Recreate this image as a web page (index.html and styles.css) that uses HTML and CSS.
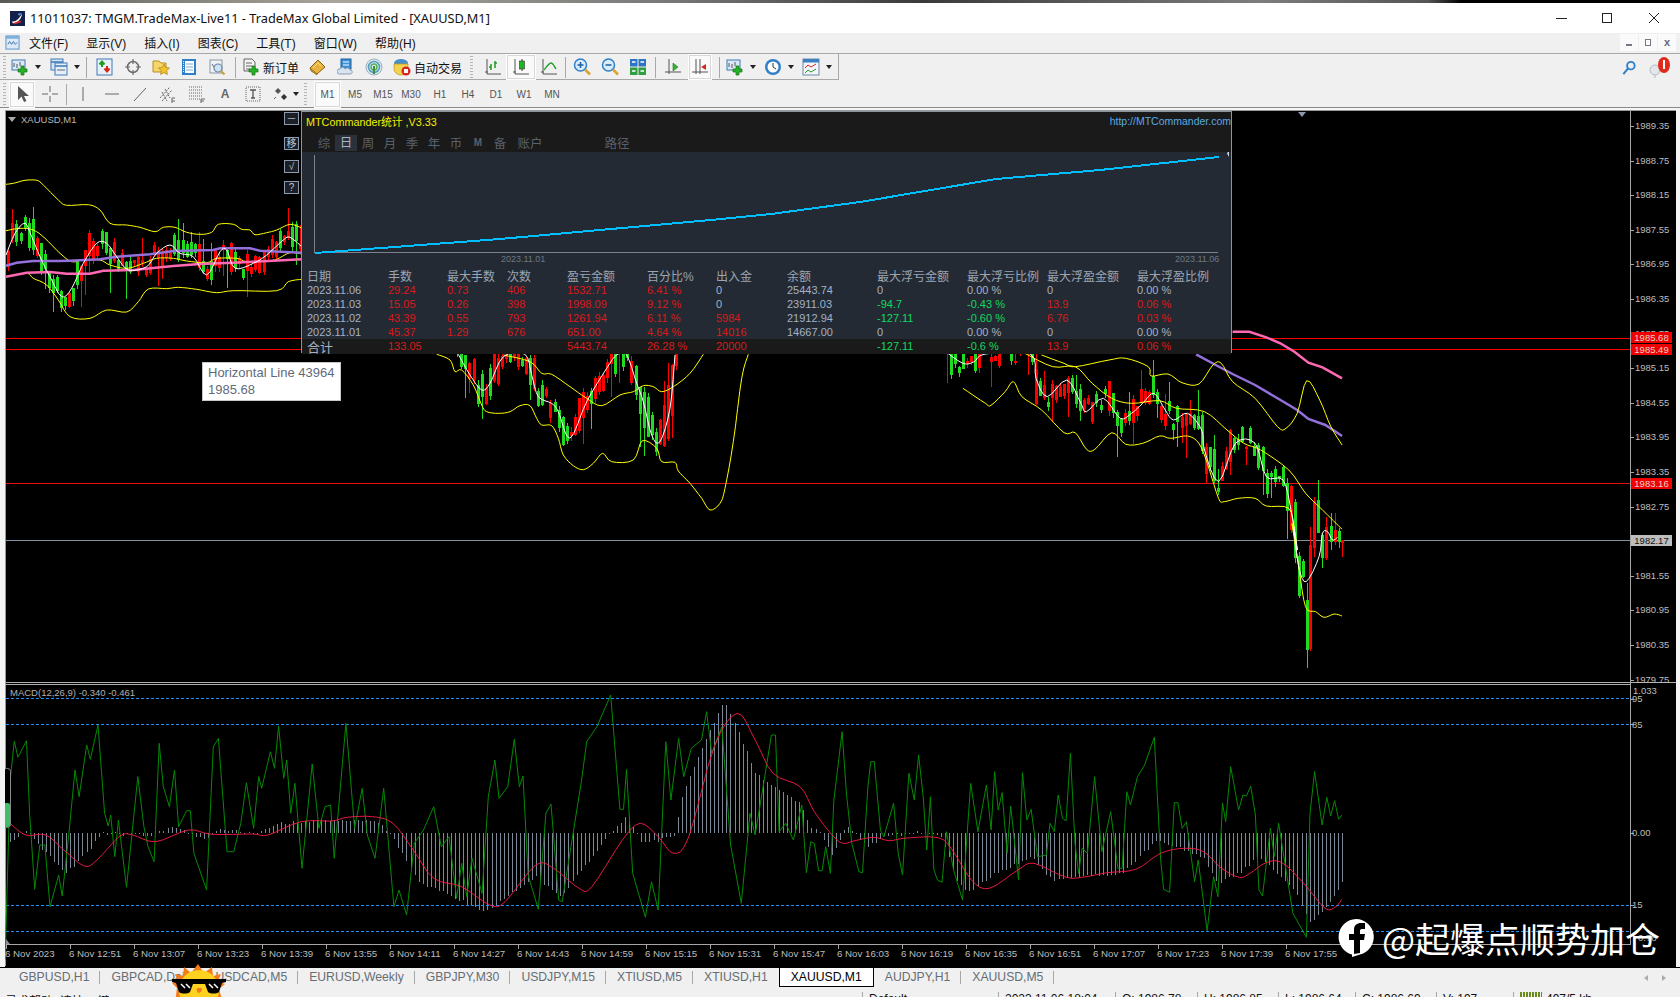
FILE: index.html
```html
<!DOCTYPE html>
<html lang="zh">
<head>
<meta charset="utf-8">
<title>MT4</title>
<link rel="stylesheet" href="styles.css">
</head>
<body>
<svg class="defs" width="0" height="0">
  <defs>
    <symbol id="i-newchart" viewBox="0 0 18 18"><rect x="1" y="2" width="13" height="10" fill="#dbe9f7" stroke="#3f78b5"/><path d="M3 9V5M6 10V6M9 8V4" stroke="#555"/><path d="M10 8h3v3h3v3h-3v3h-3v-3H7v-3h3z" fill="#27b327" stroke="#127012" stroke-width=".7"/></symbol>
    <symbol id="i-profile" viewBox="0 0 18 18"><rect x="1" y="1" width="12" height="11" fill="#d5e5f5" stroke="#3f78b5"/><rect x="5" y="5" width="12" height="12" fill="#e4effa" stroke="#3f78b5"/><path d="M1 4h12M5 8h12" stroke="#3f78b5" stroke-width="1.5"/><path d="M7 12h8" stroke="#666"/></symbol>
    <symbol id="i-market" viewBox="0 0 18 18"><rect x="1" y="1" width="15" height="16" fill="#e8f1fa" stroke="#3f78b5"/><path d="M6 9V4M3.5 6.5 6 3.5l2.5 3" stroke="#1e9e1e" stroke-width="2" fill="none"/><path d="M11 8v5M8.5 10.5l2.500 3 2.500-3" stroke="#d8261a" stroke-width="2" fill="none"/></symbol>
    <symbol id="i-target" viewBox="0 0 18 18"><circle cx="9" cy="9" r="5.500" fill="none" stroke="#6b6b6b" stroke-width="1.500"/><path d="M9 1v5M9 12v5M1 9h5M12 9h5" stroke="#6b6b6b" stroke-width="1.200"/></symbol>
    <symbol id="i-folder" viewBox="0 0 18 18"><path d="M1 3h6l2 2h5v9H1z" fill="#f6d56a" stroke="#b88f22"/><path d="M12 6l1.700 3.500 3.800.5-2.800 2.600.7 3.900-3.400-1.900-3.400 1.900.7-3.900L6.500 10l3.800-.5z" fill="#f2c32c" stroke="#a9801a" stroke-width=".7"/></symbol>
    <symbol id="i-book" viewBox="0 0 18 18"><rect x="2" y="1" width="14" height="16" fill="#2f7fc9"/><rect x="5" y="3" width="9" height="12" fill="#fff"/><path d="M6 6h7M6 9h7M6 12h7" stroke="#7aa9d6"/><path d="M3.500 3v12" stroke="#e8f1fa" stroke-dasharray="1 1"/></symbol>
    <symbol id="i-strategy" viewBox="0 0 18 18"><rect x="2" y="2" width="12" height="13" fill="#eef1f5" stroke="#8a95a2"/><path d="M4 6l2 3 2-2 3 3" fill="none" stroke="#5d6b7a"/><circle cx="10" cy="10" r="4" fill="#cfe3f5" stroke="#6d88a5" stroke-width="1.200"/><path d="M13 13l3.500 3.500" stroke="#c9a033" stroke-width="2"/></symbol>
    <symbol id="i-order" viewBox="0 0 18 18"><path d="M2 1h8l3 3v9H2z" fill="#f3f3f3" stroke="#666"/><path d="M4 5h6M4 8h6M4 11h4" stroke="#666"/><path d="M10 8h3v3h3v3h-3v3h-3v-3H7v-3h3z" fill="#27b327" stroke="#127012" stroke-width=".7"/></symbol>
    <symbol id="i-gold" viewBox="0 0 18 18"><path d="M1 10l8-8 7 7-8 7z" fill="#e9b23c" stroke="#8a6212"/><path d="M1 10l1 3 6 4v-1" fill="#b88421" stroke="#8a6212" stroke-width=".6"/><path d="M4 10l5-5 3 3" stroke="#f8dd8f" fill="none"/></symbol>
    <symbol id="i-cloud" viewBox="0 0 18 18"><rect x="4" y="1" width="10" height="10" fill="#3b8dd4" stroke="#1f5f9e"/><path d="M6 4h6M6 7h6" stroke="#fff"/><path d="M2 16a2.500 2.500 0 0 1 1-5c1-2 4-2 5 0 2-2 5-1 5 1 3 0 3 4 0 4z" fill="#d7e3ee" stroke="#8a9fb2"/></symbol>
    <symbol id="i-signal" viewBox="0 0 18 18"><circle cx="9" cy="9" r="8" fill="#dbe9ef" stroke="#9ab0bd"/><circle cx="9" cy="9" r="5.500" fill="none" stroke="#4f9ac4" stroke-width="1.500"/><circle cx="9" cy="9" r="3" fill="none" stroke="#55b155" stroke-width="1.500"/><path d="M9 8v8" stroke="#3a8f3a" stroke-width="2"/></symbol>
    <symbol id="i-auto" viewBox="0 0 18 18"><ellipse cx="8" cy="5" rx="7" ry="4" fill="#4a90c8"/><path d="M1 6h14v5a7 6 0 0 1-14 0z" fill="#f3d24f" stroke="#b99622" stroke-width=".7"/><circle cx="13" cy="13" r="4.500" fill="#d9261c"/><rect x="11" y="11" width="4" height="4" fill="#fff"/></symbol>
    <symbol id="i-bar" viewBox="0 0 18 18"><path d="M3 1v15h14M1 14h3" fill="none" stroke="#555"/><path d="M7 6v6M7 9H5M11 3v7M11 5h2" stroke="#1f9a1f" stroke-width="1.500"/></symbol>
    <symbol id="i-candle" viewBox="0 0 18 18"><path d="M3 1v15h14M1 14h3" fill="none" stroke="#555"/><path d="M10 1v12" stroke="#333"/><rect x="7.500" y="3" width="5" height="8" fill="#1fb51f" stroke="#333" stroke-width=".6"/></symbol>
    <symbol id="i-line" viewBox="0 0 18 18"><path d="M3 1v15h14M1 14h3" fill="none" stroke="#555"/><path d="M4 12c3-4 5-7 7-7s3 3 5 6" fill="none" stroke="#1f9a1f" stroke-width="1.300"/></symbol>
    <symbol id="i-zoomin" viewBox="0 0 18 18"><circle cx="7.500" cy="7" r="6" fill="#d9ecfb" stroke="#2f7fc9" stroke-width="1.500"/><path d="M7.500 4v6M4.500 7h6" stroke="#1d5f9e" stroke-width="1.500"/><path d="M12 11.500l5 5" stroke="#d7a52c" stroke-width="2.500"/></symbol>
    <symbol id="i-zoomout" viewBox="0 0 18 18"><circle cx="7.500" cy="7" r="6" fill="#d9ecfb" stroke="#2f7fc9" stroke-width="1.500"/><path d="M4.500 7h6" stroke="#1d5f9e" stroke-width="1.500"/><path d="M12 11.500l5 5" stroke="#d7a52c" stroke-width="2.500"/></symbol>
    <symbol id="i-tile" viewBox="0 0 18 18"><rect x="1" y="1" width="7.500" height="7.500" fill="#2e74c4"/><rect x="9.500" y="1" width="7.500" height="7.500" fill="#2e74c4"/><rect x="1" y="9.500" width="7.500" height="7.500" fill="#2f9e3f"/><rect x="9.500" y="9.500" width="7.500" height="7.500" fill="#2f9e3f"/><path d="M3 4h3.500M11.500 4H15M3 13h3.500M11.500 13H15" stroke="#fff" stroke-width="1.500"/></symbol>
    <symbol id="i-scroll" viewBox="0 0 18 18"><path d="M5 1v15M1 14h16" fill="none" stroke="#555"/><path d="M9 5l5 4-5 4z" fill="#35b135" stroke="#1d7d1d" stroke-width=".6"/></symbol>
    <symbol id="i-shift" viewBox="0 0 18 18"><path d="M9 1v15M1 14h16M5 1v15" fill="none" stroke="#555"/><path d="M15 6l-5 3 5 3z" fill="#d9261c"/></symbol>
    <symbol id="i-clock" viewBox="0 0 18 18"><circle cx="9" cy="9" r="8" fill="#2f7fc9"/><circle cx="9" cy="9" r="5.500" fill="#fff"/><path d="M9 5v4l3 2" fill="none" stroke="#333"/></symbol>
    <symbol id="i-template" viewBox="0 0 18 18"><rect x="1" y="1" width="16" height="16" fill="#f2f6fb" stroke="#6d88a5"/><rect x="1" y="1" width="16" height="3.500" fill="#3b80c2"/><path d="M3 10l3-3 3 2 5-3" fill="none" stroke="#d9261c"/><path d="M3 15l3-3 3 2 5-3" fill="none" stroke="#2a9a2a"/></symbol>
    <symbol id="i-arrow" viewBox="0 0 18 18"><path d="M5 1v14l3.500-3.500L11 17l2.500-1-2.500-5h5z" fill="#555"/></symbol>
    <symbol id="i-cross" viewBox="0 0 18 18"><path d="M9 1v6M9 11v6M1 9h6M11 9h6" stroke="#666"/></symbol>
    <symbol id="i-vline" viewBox="0 0 18 18"><path d="M9 2v14" stroke="#666"/></symbol>
    <symbol id="i-hline" viewBox="0 0 18 18"><path d="M2 9h14" stroke="#666"/></symbol>
    <symbol id="i-trend" viewBox="0 0 18 18"><path d="M3 16L15 3" stroke="#666"/></symbol>
    <symbol id="i-channel" viewBox="0 0 18 18"><path d="M1 13L11 2M3 16L13 5M3 7l5 9M6 4l5 9" stroke="#666" stroke-dasharray="2 1"/><path d="M13 16h3M13 13h3M13 13v6" stroke="#666"/></symbol>
    <symbol id="i-fib" viewBox="0 0 18 18"><path d="M1 2h13M1 5h13M1 8h13M1 11h13M1 14h11" stroke="#666" stroke-dasharray="1 1"/><path d="M13 14v4M13 14h4M13 16h3" stroke="#666"/></symbol>
    <symbol id="i-textbox" viewBox="0 0 18 18"><rect x="2" y="2" width="14" height="14" fill="none" stroke="#666" stroke-dasharray="1 1"/><path d="M6 5h6M9 5v8M7 13h4" stroke="#555" stroke-width="1.300"/></symbol>
    <symbol id="i-arrows" viewBox="0 0 18 18"><path d="M3 6l3-3 3 3-3 3z" fill="#555"/><path d="M9 12l3-3 3 3-3 3z" fill="#333"/><path d="M2 14l2-2" stroke="#666"/></symbol>
  </defs>
</svg>

<div class="app">
  <div class="topstrip"></div>

  <header class="titlebar">
    <svg class="appicon" viewBox="0 0 16 16"><rect width="16" height="16" fill="#12204a"/><path d="M2 11c4 1 7-2 11-8-1 6-5 10-10 10z" fill="#fff"/><path d="M3 13l8-3 1 2-7 2z" fill="#d92b2b"/><path d="M8 3l5-1-3 3z" fill="#5aa0e0"/></svg>
    <span class="titletext">11011037: TMGM.TradeMax-Live11 - TradeMax Global Limited - [XAUUSD,M1]</span>
    <div class="winctl">
      <span class="win-min"></span>
      <span class="win-max"></span>
      <svg class="win-close" viewBox="0 0 12 12"><path d="M1 1l10 10M11 1L1 11" stroke="#222" fill="none"/></svg>
    </div>
  </header>

  <nav class="menubar">
    <svg class="menuicon" viewBox="0 0 16 16"><rect x="1" y="1" width="14" height="14" fill="#dce9f6" stroke="#5b8fc4"/><rect x="1" y="1" width="14" height="3" fill="#7fb0dd"/><path d="M3 10l2-3 2 3 2-3 2 3 2-2" stroke="#3f6f9f" fill="none"/></svg>
    <span>文件(F)</span><span>显示(V)</span><span>插入(I)</span><span>图表(C)</span><span>工具(T)</span><span>窗口(W)</span><span>帮助(H)</span>
    <div class="mdi">
      <span class="mdibtn"><i class="mdi-min"></i></span>
      <span class="mdibtn"><i class="mdi-rest"></i></span>
      <span class="mdibtn mdi-x">x</span>
    </div>
  </nav>

  <div class="row row1">
    <div class="toolbar tb1">
      <i class="grip"></i>
      <span class="tb"><svg><use href="#i-newchart"/></svg></span><i class="drop"></i>
      <span class="tb ml3"><svg><use href="#i-profile"/></svg></span><i class="drop"></i>
      <i class="sep ml5"></i>
      <span class="tb ml4"><svg><use href="#i-market"/></svg></span>
      <span class="tb"><svg><use href="#i-target"/></svg></span>
      <span class="tb"><svg><use href="#i-folder"/></svg></span>
      <span class="tb"><svg><use href="#i-book"/></svg></span>
      <span class="tb"><svg><use href="#i-strategy"/></svg></span>
      <i class="sep ml4"></i>
      <span class="tbtext order"><svg><use href="#i-order"/></svg>新订单</span>
      <span class="tb ml5"><svg><use href="#i-gold"/></svg></span>
      <span class="tb"><svg><use href="#i-cloud"/></svg></span>
      <span class="tb"><svg><use href="#i-signal"/></svg></span>
      <span class="tbtext auto"><svg><use href="#i-auto"/></svg>自动交易</span>
      <i class="grip ml8"></i>
      <span class="tb ml6"><svg><use href="#i-bar"/></svg></span>
      <span class="tb pressed"><svg><use href="#i-candle"/></svg></span>
      <span class="tb"><svg><use href="#i-line"/></svg></span>
      <i class="sep ml2"></i>
      <span class="tb ml2"><svg><use href="#i-zoomin"/></svg></span>
      <span class="tb"><svg><use href="#i-zoomout"/></svg></span>
      <span class="tb"><svg><use href="#i-tile"/></svg></span>
      <i class="sep ml3"></i>
      <span class="tb ml3"><svg><use href="#i-scroll"/></svg></span>
      <span class="tb tb22 pressed ml2"><svg><use href="#i-shift"/></svg></span>
      <i class="sep ml8"></i>
      <span class="tb ml1"><svg><use href="#i-newchart"/></svg></span><i class="drop"></i>
      <span class="tb ml2"><svg><use href="#i-clock"/></svg></span><i class="drop"></i>
      <span class="tb ml2"><svg><use href="#i-template"/></svg></span><i class="drop"></i>
    </div>
    <div class="rightbox">
      <svg class="search" viewBox="0 0 16 16"><circle cx="10" cy="6" r="4" fill="none" stroke="#2f7fc9" stroke-width="2"/><path d="M7 9l-5 6" stroke="#2f7fc9" stroke-width="2.200"/></svg>
      <svg class="bell" viewBox="0 0 22 22"><circle cx="6" cy="14" r="5" fill="#e3e6ea" stroke="#b5bcc4"/><path d="M6 19v3" stroke="#bbb"/><ellipse cx="15" cy="9" rx="6" ry="8" fill="#e02a1c"/><rect x="14" y="4" width="2" height="9" fill="#fff"/></svg>
    </div>
  </div>

  <div class="row row2">
    <div class="toolbar tb2">
      <i class="grip"></i>
      <span class="tb tb24 pressed ml4"><svg><use href="#i-arrow"/></svg></span>
      <span class="tb ml2"><svg><use href="#i-cross"/></svg></span>
      <i class="sep ml2"></i>
      <span class="tb ml2"><svg><use href="#i-vline"/></svg></span>
      <span class="tb ml1"><svg><use href="#i-hline"/></svg></span>
      <span class="tb"><svg><use href="#i-trend"/></svg></span>
      <span class="tb"><svg><use href="#i-channel"/></svg></span>
      <span class="tb ml1"><svg><use href="#i-fib"/></svg></span>
      <span class="tb tbA">A</span>
      <span class="tb"><svg><use href="#i-textbox"/></svg></span>
      <span class="tb"><svg><use href="#i-arrows"/></svg></span><i class="drop tight"></i>
      <i class="grip ml4"></i>
      <span class="tf tf1 pressed ml8">M1</span>
      <span class="tf ml1">M5</span><span class="tf">M15</span><span class="tf">M30</span>
      <span class="tf ml1">H1</span><span class="tf">H4</span><span class="tf">D1</span><span class="tf">W1</span><span class="tf">MN</span>
    </div>
  </div>

  <main class="chartwrap">
    <div class="chart">
      <svg id="plot" class="plot" viewBox="5 110 1671 857" width="1671" height="857"></svg>

      <div class="symbol"><i class="symtri"></i>XAUUSD,M1</div>
      <div class="macdlabel">MACD(12,26,9) -0.340 -0.461</div>

      <div class="sidebtns">
        <span class="sbtn">－</span>
        <span class="sbtn sb2">移</span>
        <span class="sbtn sb3">√</span>
        <span class="sbtn sb4">?</span>
      </div>

      <div class="tooltip">Horizontal Line 43964<br>1985.68</div>

      <section class="dialog">
        <div class="dlg-head"><span class="dlg-title">MTCommander统计 ,V3.33</span><span class="dlg-link">http://MTCommander.com</span></div>
        <div class="dlg-tabs">
          <span>综</span><span class="on">日</span><span>周</span><span>月</span><span>季</span><span>年</span><span>币</span><span class="mm">M</span><span>备</span><span class="acct">账户</span><span class="path">路径</span>
        </div>
        <div class="dlg-body">
          <div class="dlg-plot">
            <span class="pd pd1">2023.11.01</span><span class="pd pd2">2023.11.06</span>
          </div>
          <div class="grid head"><span>日期</span><span>手数</span><span>最大手数</span><span>次数</span><span>盈亏金额</span><span>百分比%</span><span>出入金</span><span>余额</span><span>最大浮亏金额</span><span>最大浮亏比例</span><span>最大浮盈金额</span><span>最大浮盈比例</span></div>
          <div class="grid"><span>2023.11.06</span><b>29.24</b><b>0.73</b><b>406</b><b>1532.71</b><b>6.41 %</b><span>0</span><span>25443.74</span><span>0</span><span>0.00 %</span><span>0</span><span>0.00 %</span></div>
          <div class="grid"><span>2023.11.03</span><b>15.05</b><b>0.26</b><b>398</b><b>1998.09</b><b>9.12 %</b><span>0</span><span>23911.03</span><em>-94.7</em><em>-0.43 %</em><b>13.9</b><b>0.06 %</b></div>
          <div class="grid"><span>2023.11.02</span><b>43.39</b><b>0.55</b><b>793</b><b>1261.94</b><b>6.11 %</b><b>5984</b><span>21912.94</span><em>-127.11</em><em>-0.60 %</em><b>6.76</b><b>0.03 %</b></div>
          <div class="grid"><span>2023.11.01</span><b>45.37</b><b>1.29</b><b>676</b><b>651.00</b><b>4.64 %</b><b>14016</b><span>14667.00</span><span>0</span><span>0.00 %</span><span>0</span><span>0.00 %</span></div>
        </div>
        <div class="grid total"><span class="sum">合计</span><b>133.05</b><span></span><span></span><b>5443.74</b><b>26.28 %</b><b>20000</b><span></span><em>-127.11</em><em>-0.6 %</em><b>13.9</b><b>0.06 %</b></div>
      </section>

      <div class="priceaxis">
        <span>1989.35</span><span>1988.75</span><span>1988.15</span><span>1987.55</span><span>1986.95</span><span>1986.35</span><span>1985.75</span><span>1985.15</span><span>1984.55</span><span>1983.95</span><span>1983.35</span><span>1982.75</span><span>1982.15</span><span>1981.55</span><span>1980.95</span><span>1980.35</span><span>1979.75</span>
      </div>
      <span class="tag tag1">1985.68</span>
      <span class="tag tag2">1985.49</span>
      <span class="tag tag3">1983.16</span>
      <span class="tag tag4">1982.17</span>

      <span class="sub s1">1.033</span><span class="sub s2">95</span><span class="sub s3">85</span><span class="sub s4">0.00</span><span class="sub s5">15</span><span class="sub s6">0.78</span>

      <div class="timeaxis">
        <span>6 Nov 2023</span><span>6 Nov 12:51</span><span>6 Nov 13:07</span><span>6 Nov 13:23</span><span>6 Nov 13:39</span><span>6 Nov 13:55</span><span>6 Nov 14:11</span><span>6 Nov 14:27</span><span>6 Nov 14:43</span><span>6 Nov 14:59</span><span>6 Nov 15:15</span><span>6 Nov 15:31</span><span>6 Nov 15:47</span><span>6 Nov 16:03</span><span>6 Nov 16:19</span><span>6 Nov 16:35</span><span>6 Nov 16:51</span><span>6 Nov 17:07</span><span>6 Nov 17:23</span><span>6 Nov 17:39</span><span>6 Nov 17:55</span>
      </div>

      <div class="watermark">
        <svg class="wm-logo" viewBox="0 0 40 40"><path d="M20 1a18 18 0 0 1 4 35.500L16 39v-2.600A18 18 0 0 1 20 1z" fill="#fff"/><path d="M18 36V22h-5v-6h5v-4c0-5 3-7 7-7h4v6h-3c-2 0-2 1-2 2v3h5l-1 6h-4v13z" fill="#000"/></svg>
        <span>@起爆点顺势加仓</span>
      </div>
    </div>
  </main>

  <div class="tabs">
    <span class="tab">GBPUSD,H1</span>
    <span class="tab">GBPCAD,Daily</span>
    <span class="tab">USDCAD,M5</span>
    <span class="tab">EURUSD,Weekly</span>
    <span class="tab">GBPJPY,M30</span>
    <span class="tab">USDJPY,M15</span>
    <span class="tab">XTIUSD,M5</span>
    <span class="tab noline">XTIUSD,H1</span>
    <span class="tab active">XAUUSD,M1</span>
    <span class="tab">AUDJPY,H1</span>
    <span class="tab">XAUUSD,M5</span>
    <span class="tabnav"><i class="tn-l"></i><i class="tn-r"></i></span>
  </div>

  <footer class="status">
    <span class="st st0">寻求帮助, 请按F1键</span>
    <span class="st st1">Default</span>
    <span class="st st2">2023.11.06 18:04</span>
    <span class="st st3">O: 1986.78</span>
    <span class="st st3b">H: 1986.85</span>
    <span class="st st3c">L: 1986.64</span>
    <span class="st st3d">C: 1986.69</span>
    <span class="st st4">V: 197</span>
    <span class="st st5"><i class="conn"></i>497/5 kb</span>
  </footer>

  <svg class="sticker" viewBox="0 0 60 40">
    <path d="M8 26l-5-5 6-2-3-7 8 2 1-9 7 6 7-9 6 9 8-6 1 9 8-2-3 7 7 3-6 5 4 14H6z" fill="#f57a18"/>
    <circle cx="30" cy="28" r="20" fill="#ffd21f"/>
    <path d="M3 17h54v3l-4 1-3 9c-2 2-9 2-11 0l-3-8h-12l-3 8c-2 2-9 2-11 0l-3-9-4-1z" fill="#000"/>
    <path d="M12 22l4 4M17 22l4 4M40 22l4 4M45 22l4 4" stroke="#fff" stroke-width="1.500"/>
    <path d="M28 26c-2 6 5 7 5 0" fill="#f57a18"/>
  </svg>
</div>
<script src="script.js"></script>
</body>
</html>
```
FILE: styles.css
```css
* { box-sizing: border-box; }
html, body { margin: 0; padding: 0; height: 100%; overflow: hidden; background: #f0f0f0; }
body { font-family: "Liberation Sans", "Noto Sans CJK SC", sans-serif; }
i { display: block; font-style: normal; }
.defs { position: absolute; }

.app { position: relative; width: 1680px; height: 997px; overflow: hidden; display: flex; flex-direction: column; }
.topstrip { height: 3px; background: linear-gradient(90deg, #5a5a55, #a8a69c 20%, #777 40%, #3a3a3a 55%, #7d7d7d 75%, #555 85%, #000 87%); flex: none; }

.titlebar { height: 30px; flex: none; background: #fff; display: flex; align-items: center; padding-left: 10px; }
.appicon { width: 15px; height: 15px; flex: none; margin-right: 5px; }
.titletext { font: 12.750px "Noto Sans", "Liberation Sans", sans-serif; color: #111; white-space: nowrap; }
.winctl { margin-left: auto; display: flex; align-items: center; padding-right: 20px; }
.win-min { width: 11px; height: 1px; background: #222; margin-right: 35px; }
.win-max { width: 10px; height: 10px; border: 1px solid #222; margin-right: 36px; }
.win-close { width: 12px; height: 12px; }

.menubar { height: 20px; flex: none; background: #f0f0f0; display: flex; align-items: center; padding: 0 0 2px 5px; gap: 18px; font-size: 12px; color: #111; }
.menuicon { width: 15px; height: 15px; margin-right: -9px; flex: none; }
.mdi { margin-left: auto; display: flex; gap: 1px; padding-right: 4px; }
.mdibtn { width: 18px; height: 17px; background: #fafafa; display: flex; align-items: center; justify-content: center; color: #667; font-size: 11px; font-weight: bold; }
.mdi-min { width: 6px; height: 2px; background: #778; margin-top: 6px; }
.mdi-rest { width: 6px; height: 7px; border: 1px solid #778; }

.row { flex: none; display: flex; background: #f0f0f0; }
.row1 { height: 28px; border-top: 1px solid #a8a8a8; }
.row2 { height: 27px; border-bottom: 1px solid #8a8a8a; }
.toolbar { display: flex; align-items: center; padding-left: 3px; height: 26px; }
.tb1 { width: 839px; padding-top: 1px; border-right: 1px solid #a8a8a8; border-bottom: 1px solid #a8a8a8; }
.tb { width: 28px; height: 24px; flex: none; display: flex; align-items: center; justify-content: center; }
.tb2 .tb { height: 25px; }
.tb svg { width: 18px; height: 18px; display: block; }
.tb22 { width: 22px; }
.tb24 { width: 24px; }
.tbA { font-size: 12px; font-weight: bold; color: #666; }
.pressed { background: #fafafa; outline: 1px solid #fff; box-shadow: inset 0 0 0 1px #d8d8d8; }
.grip { width: 3px; height: 22px; flex: none; background: repeating-linear-gradient(180deg, #b5b5b5 0 1px, transparent 1px 3px); }
.sep { width: 1px; height: 21px; flex: none; background: #a8a8a8; }
.drop { width: 8px; height: 4px; flex: none; position: relative; }
.drop::after { content: ""; position: absolute; left: 1px; top: 0; border: 3px solid transparent; border-top: 4px solid #222; border-bottom: 0; }
.drop.tight { margin-left: -3px; }
.ml1 { margin-left: 1px; } .ml2 { margin-left: 2px; } .ml3 { margin-left: 3px; } .ml4 { margin-left: 4px; } .ml5 { margin-left: 5px; } .ml6 { margin-left: 6px; } .ml8 { margin-left: 8px; }
.tbtext { display: flex; align-items: center; font-size: 12px; color: #111; flex: none; white-space: nowrap; }
.tbtext svg { width: 18px; height: 18px; flex: none; margin-right: 3px; }
.order { margin-left: 6px; }
.auto { padding-left: 5px; }
.tf { width: 28px; height: 25px; flex: none; display: flex; align-items: center; justify-content: center; font-size: 10px; color: #555; }
.tf1 { width: 25px; }
.rightbox { margin-left: auto; display: flex; align-items: center; gap: 12px; height: 26px; padding-right: 9px; }
.search { width: 16px; height: 15px; }
.bell { width: 22px; height: 22px; }

.chartwrap { flex: none; height: 859px; padding: 2px 4px 0 5px; background: #f4f4f4; }
.chart { position: relative; width: 1671px; height: 857px; background: #000; overflow: hidden; }
.plot { position: absolute; left: 0; top: 0; display: block; }

.symbol { position: absolute; left: 3px; top: 3px; height: 12px; display: flex; align-items: center; font-size: 9.500px; color: #b8b8b8; }
.symtri { width: 0; height: 0; border: 4px solid transparent; border-top: 5px solid #aaa; border-bottom: 0; margin-right: 5px; }
.macdlabel { position: absolute; left: 5px; top: 577px; font-size: 9.500px; color: #b0b0b0; white-space: nowrap; }

.sidebtns { position: absolute; left: 279px; top: 2px; width: 15px; }
.sbtn { position: absolute; left: 0; top: 0; width: 15px; height: 13px; background: #1c1f26; border: 1px solid #8d9bb0; color: #b9c4d2; font-size: 10px; line-height: 11px; text-align: center; }
.sb2 { top: 25px; } .sb3 { top: 48px; } .sb4 { top: 69px; }

.tooltip { position: absolute; left: 197px; top: 252px; width: 139px; height: 39px; background: #fff; border: 1px solid #c8c8c8; padding: 1px 5px; font-size: 13px; line-height: 17px; color: #5f6b78; white-space: nowrap; }

.dialog { position: absolute; left: 296px; top: 1px; width: 931px; height: 242px; background: #1a1a1a; border: 1px solid #8a94a3; display: flex; flex-direction: column; }
.dlg-head { height: 19px; flex: none; display: flex; justify-content: space-between; align-items: center; padding: 0 0 2px 4px; font-size: 10.800px; }
.dlg-title { color: #f0f000; }
.dlg-link { color: #5aa9e0; font-size: 10.500px; }
.dlg-tabs { height: 21px; flex: none; display: flex; align-items: center; padding-left: 11px; padding-top: 2px; font-size: 12.500px; color: #59616c; }
.dlg-tabs span { width: 22px; text-align: center; flex: none; }
.dlg-tabs .on { background: #2b313b; color: #aab3c0; height: 16px; line-height: 16px; }
.dlg-tabs .mm { font-size: 10px; font-weight: bold; }
.dlg-tabs .acct { width: 30px; margin-left: 4px; }
.dlg-tabs .path { width: 30px; margin-left: 57px; }
.dlg-body { flex: 1; background: #242a33; }
.dlg-plot { position: relative; height: 117px; }
.pd { position: absolute; top: 102px; font-size: 9px; color: #6f7782; }
.pd1 { left: 199px; }
.pd2 { left: 873px; }
.grid { display: grid; grid-template-columns: 81px 59px 60px 60px 80px 69px 71px 90px 90px 80px 90px 1fr; height: 14px; padding-left: 5px; font-size: 11px; line-height: 14px; color: #a3b1c6; white-space: nowrap; }
.grid b { font-weight: normal; color: #d81a1a; }
.grid em { font-style: normal; color: #10d860; }
.head { font-size: 12px; line-height: 16px; color: #9aa6b6; }
.total { height: 15px; background: #1a1a1a; flex: none; }
.sum { font-size: 13px; line-height: 18px; color: #a3b1c6; }

.priceaxis { position: absolute; left: 1630px; top: 10px; width: 41px; display: flex; flex-direction: column; font-size: 9.500px; color: #bdbdbd; }
.priceaxis span { height: 34.600px; line-height: 12px; }
.tag { position: absolute; left: 1626px; width: 41px; height: 11px; font-size: 9.500px; line-height: 11px; text-align: center; background: #f00000; color: #e8d4c8; }
.tag1 { top: 222px; } .tag2 { top: 234px; } .tag3 { top: 368px; }
.tag4 { top: 425px; background: #bdbdbd; color: #111; }
.sub { position: absolute; left: 1627px; font-size: 9.500px; color: #bdbdbd; line-height: 12px; }
.s1 { top: 575px; left: 1628px; } .s2 { top: 583px; } .s3 { top: 609px; } .s4 { top: 717px; } .s5 { top: 789px; } .s6 { top: 822px; left: 1633px; }

.timeaxis { position: absolute; left: 0; top: 838px; display: flex; font-size: 9.700px; color: #bdbdbd; white-space: nowrap; }
.timeaxis span { width: 64px; flex: none; }

.watermark { position: absolute; left: 1331px; top: 806px; display: flex; align-items: center; gap: 6px; color: #fff; font: 35px/44px "Noto Sans CJK SC", sans-serif; white-space: nowrap; }
.wm-logo { width: 40px; height: 42px; flex: none; }

.tabs { height: 20px; flex: none; display: flex; align-items: stretch; background: #f0f0f0; border-top: 1px solid #000; padding-left: 8px; font-size: 12.200px; color: #666d75; }
.tab { padding: 0 11px; position: relative; line-height: 19px; white-space: nowrap; }
.tab::after { content: ""; position: absolute; right: 0; top: 3px; bottom: 3px; width: 1px; background: #a8a8a8; }
.tab.noline::after { display: none; }
.tab.active { background: #fff; color: #000; border: 1px solid #000; border-top: 0; }
.tab.active::after { display: none; }
.tabnav { margin-left: auto; display: flex; align-items: center; gap: 14px; padding-right: 14px; }
.tn-l { border: 3px solid transparent; border-right: 4px solid #aaa; border-left: 0; }
.tn-r { border: 3px solid transparent; border-left: 4px solid #aaa; border-right: 0; }

.status { flex: none; height: 30px; display: flex; background: #f0f0f0; font-size: 12px; color: #111; padding-top: 5px; white-space: nowrap; }
.st { display: block; padding-left: 6px; border-left: 1px solid #a8a8a8; height: 20px; flex: none; }
.st0 { width: 862px; border-left: 0; padding-left: 5px; }
.st1 { width: 136px; } .st2 { width: 117px; } .st3 { width: 82px; } .st3b { width: 81px; } .st3c { width: 77px; } .st3d { width: 81px; } .st4 { width: 77px; } .st5 { display: flex; }
.conn { width: 22px; height: 8px; margin-right: 4px; background: repeating-linear-gradient(90deg, #6a8a1c 0 2px, transparent 2px 3px); }

.sticker { position: absolute; left: 169px; top: 962px; width: 60px; height: 40px; }
```
FILE: script.js
```js
(function () {
  var svg = document.getElementById('plot');
  var out = [];
  var seed = 12345;
  function rnd() { seed = (seed * 1664525 + 1013904223) >>> 0; return seed / 4294967296; }
  function Z(ox, sx, oy, a) { var r = []; for (var i = 0; i < a.length; i += 2) r.push([ox + a[i] / sx, oy + a[i + 1] / 3]); return r; }
  function Z7(a) { return Z(0, 3, 100, a); }
  function Z4(a) { return Z(800, 1.78, 250, a); }
  function Z9(a) { return Z(1150, 2.958, 500, a); }
  function Z11(a) { return Z(430, 3, 345, a); }
  function Z8(a) { return Z(0, 1.96, 680, a); }
  function Z10(a) { return Z(800, 2.8, 680, a); }
  /* Catmull-Rom resampling: turns sparse readings into the smooth indicator curves */
  function smooth(p) {
    var r = [];
    for (var i = 0; i < p.length - 1; i++) {
      var a = p[Math.max(0, i - 1)], b = p[i], c = p[i + 1], d = p[Math.min(p.length - 1, i + 2)];
      for (var k = 0; k < 4; k++) {
        var t = k / 4, t2 = t * t, t3 = t2 * t;
        r.push([
          0.5 * (2 * b[0] + (c[0] - a[0]) * t + (2 * a[0] - 5 * b[0] + 4 * c[0] - d[0]) * t2 + (3 * b[0] - a[0] - 3 * c[0] + d[0]) * t3),
          0.5 * (2 * b[1] + (c[1] - a[1]) * t + (2 * a[1] - 5 * b[1] + 4 * c[1] - d[1]) * t2 + (3 * b[1] - a[1] - 3 * c[1] + d[1]) * t3)
        ]);
      }
    }
    r.push(p[p.length - 1]);
    return r;
  }
  function line(p, c, w, extra) {
    out.push('<polyline fill="none" stroke="' + c + '" stroke-width="' + w + '" ' + (extra || '') + ' points="' + p.map(function (q) { return q[0].toFixed(1) + ',' + q[1].toFixed(1); }).join(' ') + '"/>');
  }
  function hline(y, x0, x1, c, extra) { out.push('<line x1="' + x0 + '" x2="' + x1 + '" y1="' + y + '" y2="' + y + '" stroke="' + c + '" ' + (extra || '') + '/>'); }
  function vline(x, y0, y1, c) { out.push('<line x1="' + x + '" x2="' + x + '" y1="' + y0 + '" y2="' + y1 + '" stroke="' + c + '"/>'); }
  function interp(p, x) {
    if (x <= p[0][0]) return p[0][1];
    for (var i = 1; i < p.length; i++) if (x <= p[i][0]) { var t = (x - p[i - 1][0]) / (p[i][0] - p[i - 1][0] || 1); return p[i - 1][1] + t * (p[i][1] - p[i - 1][1]); }
    return p[p.length - 1][1];
  }
  var GREEN = '#1fdc1f', RED = '#ff0000';
  function candle(x, t, b, wt, wb, c) {
    out.push('<rect x="' + Math.round(x) + '" y="' + wt.toFixed(0) + '" width="1" height="' + (wb - wt).toFixed(0) + '" fill="' + c + '"/>');
    out.push('<rect x="' + (Math.round(x) - 1) + '" y="' + t.toFixed(0) + '" width="3" height="' + Math.max(1, b - t).toFixed(0) + '" fill="' + c + '"/>');
  }
  function candles(x0, x1, white, amp) {
    for (var x = x1; x >= x0; x -= 4.05) {
      var y = interp(white, x), s = interp(white, x + 4) - interp(white, x - 4);
      var up = s < 0; if (rnd() < 0.25) up = !up;
      var r = rnd();
      var h = 1 + r * r * amp + Math.abs(s) * 0.4;
      var off = (rnd() - 0.5) * 20;
      var t = y - h + off, b = y + h + off;
      var wt = t - rnd() * 5, wb = b + rnd() * 5;
      if (rnd() < 0.3) { if (rnd() < 0.5) wt -= 8 + rnd() * 14; else wb += 8 + rnd() * 22; }
      candle(x, t, b, wt, wb, up ? RED : GREEN);
    }
  }

  /* frame */
  out.push('<g shape-rendering="crispEdges">');
  hline(110.5, 5, 1676, '#9a9a9a');
  vline(5.5, 110, 966, '#9a9a9a');
  hline(338.5, 6, 1630, '#ff0000');
  hline(349.5, 6, 1630, '#ff0000');
  hline(483.5, 6, 1630, '#e81010');
  hline(540.5, 6, 1630, '#8494a5');

  var whiteL = Z7([6, 470, 18, 465, 45, 400, 75, 370, 95, 410, 120, 470, 150, 530, 185, 590, 215, 565, 250, 490, 290, 430, 320, 430, 350, 470, 385, 510, 440, 500, 470, 460, 510, 435, 540, 460, 580, 470, 620, 525, 660, 455, 680, 450, 705, 505, 760, 490, 800, 465, 850, 420, 870, 412, 905, 440]);
  var whiteC = Z11([60, 10, 85, 28, 120, 90, 155, 135, 180, 115, 220, 35, 285, 28, 305, 90, 325, 155, 365, 175, 385, 200, 420, 280, 470, 170, 530, 70, 560, 30, 590, 30, 620, 115, 640, 170, 665, 270, 690, 290, 720, 190, 735, 30]);
  var whiteR = Z4([255, 300, 290, 340, 310, 335, 330, 312, 410, 312, 420, 385, 440, 440, 475, 390, 500, 460, 510, 485, 540, 445, 570, 505, 590, 490, 610, 460, 630, 430, 650, 480, 665, 510, 690, 490, 715, 540, 720, 600, 745, 695, 775, 580, 810, 580, 830, 680, 860, 690, 875, 790, 885, 900]).concat(Z9([425, 80, 440, 200, 462, 245, 500, 170, 510, 100, 525, 95, 540, 120, 555, 112]));

  candles(7, 300, whiteL, 8);
  candles(452, 676, whiteC, 10);
  candles(944, 1303, whiteR, 10);
  // last bars, read directly from the reference
  var last = [[463, 300, 450, 250, 505, GREEN], [474, 135, 448, 80, 452, RED], [486, 3, 145, -10, 170, RED], [498, 0, 100, -60, 100, GREEN], [510, 105, 175, 100, 205, GREEN], [522, 82, 175, 50, 180, RED], [534, 78, 125, 40, 150, GREEN], [546, 90, 125, 40, 135, RED], [558, 92, 125, 85, 145, GREEN], [569, 120, 128, 120, 170, RED]];
  last.forEach(function (c) { candle(1150 + c[0] / 2.958, 500 + c[1] / 3, 500 + c[2] / 3, 500 + c[3] / 3, 500 + c[4] / 3, c[5]); });
  out.push('</g>');

  /* bands */
  var Y = '#ffff00';
  line(smooth(Z7([18, 253, 40, 250, 75, 241, 110, 241, 130, 255, 175, 300, 200, 316, 265, 314, 300, 330, 330, 370, 380, 375, 420, 382, 465, 395, 490, 382, 525, 382, 560, 397, 600, 403, 635, 397, 655, 373, 700, 373, 725, 388, 750, 390, 765, 404, 800, 398, 830, 390, 870, 373, 905, 384])), Y, 1);
  line(smooth(Z7([18, 530, 80, 520, 100, 535, 140, 555, 175, 600, 210, 650, 270, 655, 320, 630, 380, 636, 415, 605, 445, 567, 500, 566, 535, 562, 590, 568, 650, 578, 700, 572, 830, 572, 865, 545, 905, 538])), Y, 1);
  line(smooth(Z7([18, 392, 60, 385, 100, 390, 135, 415, 180, 460, 215, 485, 250, 480, 300, 480, 330, 495, 380, 505, 430, 490, 470, 475, 520, 475, 560, 483, 620, 488, 650, 475, 710, 475, 740, 485, 800, 483, 830, 478, 870, 458, 905, 462])), Y, 1);
  line(Z7([18, 497, 50, 488, 100, 483, 175, 483, 210, 482, 300, 478, 350, 470, 450, 463, 520, 453, 640, 450, 660, 445, 750, 445, 780, 452, 905, 458]), '#9370db', 2.5);
  line(Z7([18, 530, 80, 518, 150, 516, 200, 521, 270, 521, 310, 512, 400, 510, 520, 498, 600, 492, 700, 488, 760, 485, 905, 478]), '#ff69b4', 2.5);
  line(smooth(whiteL.slice(1)), '#fff', 1);

  line(smooth(Z11([20, 28, 60, 45, 75, 80, 95, 75, 130, 120, 155, 180, 170, 200, 205, 205, 240, 200, 270, 182, 300, 182, 320, 220, 335, 240, 365, 242, 385, 280, 400, 330, 430, 362, 460, 374, 490, 355, 518, 325, 545, 350, 610, 345, 637, 287, 680, 310, 695, 350, 735, 352, 745, 378, 780, 415, 815, 460, 840, 495, 870, 475, 885, 430, 910, 290, 935, 100, 955, 28])), Y, 1);
  line(smooth(Z11([220, 30, 300, 50, 335, 85, 365, 88, 420, 125, 470, 160, 515, 182, 570, 150, 610, 140, 640, 122, 670, 125, 695, 140, 730, 125, 780, 85, 820, 28])), Y, 1);
  line(smooth(whiteC.slice(1)), '#fff', 1);

  line(Z4([770, 245, 800, 245, 830, 262, 855, 280, 880, 305, 905, 338, 930, 352, 965, 385]), '#ff69b4', 2.5);
  line(Z4([705, 313, 740, 345, 770, 372, 810, 405, 850, 445, 885, 480, 905, 507, 935, 525, 965, 558]), '#9370db', 2.5);
  line(smooth(Z4([430, 315, 470, 340, 490, 350, 550, 330, 580, 325, 620, 350, 625, 378, 655, 372, 680, 398, 710, 402, 735, 345, 750, 340, 770, 395, 810, 445, 850, 530, 865, 535, 885, 490, 902, 392, 925, 450, 945, 530, 965, 585])), Y, 1);
  line(smooth(Z4([290, 415, 330, 460, 340, 466, 365, 425, 380, 395, 395, 440, 430, 480, 470, 548, 490, 548, 510, 598, 525, 598, 555, 548, 580, 583, 610, 580, 640, 558, 660, 565, 690, 558, 710, 580, 725, 640, 745, 745, 755, 755, 780, 745, 810, 745, 830, 768, 870, 775, 880, 840, 885, 900]).concat(Z9([420, 70, 440, 200, 460, 320, 490, 335, 515, 352, 545, 342, 568, 348]))), Y, 1);
  line(smooth(Z4([400, 310, 450, 350, 490, 350, 520, 400, 555, 445, 590, 460, 640, 452, 670, 475, 720, 485, 760, 540, 790, 580, 820, 600, 870, 660, 900, 730, 930, 780, 965, 838])), Y, 1);
  line(smooth(whiteR), '#fff', 1);
  out.push('<path d="M1298 112h8l-4 5z" fill="#8a97a8"/>');

  /* separator and sub window */
  out.push('<g shape-rendering="crispEdges">');
  hline(682.5, 5, 1676, '#b0b0b0');
  hline(684.5, 5, 1630, '#b0b0b0');
  var Bh = '#1e90ff';
  [698.5, 724.5, 905.5, 931.5].forEach(function (y) { hline(y, 6, 1630, Bh, 'stroke-dasharray="3 2"'); });

  var env = Z8([15, 490, 50, 450, 60, 470, 130, 580, 170, 520, 200, 458, 290, 470, 340, 440, 400, 480, 430, 445, 500, 463, 550, 430, 640, 420, 740, 425, 770, 470, 820, 605, 950, 695, 1050, 590, 1100, 650, 1190, 470, 1230, 405, 1260, 490, 1320, 470, 1340, 330, 1420, 55, 1480, 280, 1540, 340]).concat(Z10([0, 370, 30, 440, 60, 462, 90, 530, 130, 435, 145, 450, 190, 500, 240, 470, 340, 455, 395, 470, 440, 600, 470, 640, 530, 590, 590, 560, 650, 530, 710, 605, 780, 590, 900, 580, 1000, 480, 1020, 490, 1070, 505, 1130, 530, 1170, 610, 1230, 580, 1280, 530, 1310, 550, 1390, 640, 1430, 735, 1470, 680, 1510, 630, 1520, 600]));
  for (var x = 1342; x >= 8; x -= 4.05) {
    var e = interp(env, x) + (rnd() - 0.5) * 3, b = 833;
    var top = Math.min(e, b), bot = Math.max(e, b);
    out.push('<rect x="' + Math.round(x) + '" y="' + top.toFixed(0) + '" width="1" height="' + Math.max(1, bot - top).toFixed(0) + '" fill="#7d8896"/>');
  }
  out.push('</g>');

  var gr = Z8([10, 840, 20, 300, 28, 183, 35, 232, 52, 182, 58, 400, 68, 628, 78, 495, 88, 495, 98, 680, 115, 585, 122, 648, 135, 460, 147, 270, 155, 350, 170, 195, 177, 238, 192, 135, 205, 400, 212, 438, 217, 405, 225, 530, 232, 420, 248, 622, 270, 290, 282, 440, 290, 500, 302, 545, 312, 190, 320, 320, 332, 380, 342, 270, 350, 440, 366, 392, 373, 392, 380, 520, 405, 630, 418, 200, 428, 175, 445, 515, 458, 515, 472, 430, 483, 308, 497, 445, 507, 290, 513, 325, 530, 215, 538, 265, 546, 138, 556, 295, 562, 240, 570, 400, 578, 310, 592, 565, 612, 252, 625, 445, 637, 380, 648, 375, 655, 535, 678, 130, 695, 445, 710, 325, 720, 465, 735, 535, 752, 325, 772, 680, 782, 630, 797, 705, 812, 490, 830, 450, 850, 380, 865, 500, 880, 470, 895, 655, 905, 550, 915, 650, 925, 535, 945, 640, 957, 350, 970, 240, 978, 355, 995, 320, 1008, 178, 1018, 320, 1025, 288, 1035, 585, 1055, 688, 1070, 400, 1080, 372, 1095, 660, 1102, 665, 1140, 300, 1150, 185, 1170, 140, 1197, 45, 1215, 388, 1222, 388, 1228, 268, 1240, 580, 1265, 712, 1277, 605, 1290, 690, 1305, 185, 1315, 360, 1330, 175, 1340, 290, 1355, 205, 1375, 180, 1385, 95, 1395, 220, 1415, 140, 1432, 495, 1453, 670, 1470, 400, 1480, 465, 1500, 280, 1512, 165, 1520, 165, 1527, 455, 1540, 430, 1555, 480]).concat(Z10([5, 375, 18, 578, 30, 485, 40, 490, 52, 572, 62, 572, 72, 500, 85, 580, 95, 360, 118, 155, 130, 340, 145, 490, 165, 575, 175, 578, 190, 320, 198, 245, 208, 245, 225, 450, 235, 470, 262, 370, 275, 520, 287, 585, 305, 280, 320, 360, 332, 225, 345, 350, 355, 510, 365, 350, 375, 570, 385, 600, 398, 607, 410, 455, 430, 570, 455, 660, 478, 310, 498, 455, 522, 315, 535, 450, 545, 275, 555, 390, 566, 338, 580, 520, 590, 378, 612, 600, 623, 278, 635, 420, 647, 388, 665, 530, 690, 525, 700, 430, 712, 455, 723, 345, 735, 415, 745, 422, 757, 220, 770, 490, 780, 580, 790, 505, 805, 520, 825, 290, 845, 515, 870, 395, 890, 565, 902, 565, 915, 335, 925, 375, 945, 290, 965, 255, 992, 172, 1010, 540, 1018, 628, 1035, 637, 1048, 368, 1058, 368, 1070, 445, 1082, 425, 1105, 605, 1115, 540, 1140, 752, 1158, 590, 1170, 650, 1183, 370, 1192, 425, 1206, 260, 1228, 390, 1240, 345, 1250, 348, 1262, 318, 1275, 405, 1285, 630, 1295, 648, 1317, 445, 1328, 530, 1340, 430, 1355, 530, 1380, 700, 1418, 772, 1428, 400, 1441, 275, 1462, 435, 1475, 352, 1486, 408, 1497, 362, 1508, 418, 1517, 405]));
  line(gr, '#058a05', 1);
  var re = Z8([20, 430, 50, 465, 90, 465, 125, 510, 165, 558, 190, 540, 235, 468, 260, 465, 305, 485, 370, 450, 415, 463, 495, 462, 525, 465, 590, 425, 650, 423, 680, 412, 730, 410, 770, 430, 810, 510, 850, 595, 905, 620, 960, 675, 990, 665, 1050, 555, 1085, 565, 1135, 625, 1160, 620, 1220, 480, 1255, 430, 1290, 470, 1320, 520, 1350, 470, 1400, 200, 1445, 100, 1480, 180, 1515, 280]).concat(Z10([0, 320, 40, 395, 90, 465, 120, 490, 150, 483, 205, 472, 250, 482, 290, 475, 380, 472, 420, 500, 480, 600, 530, 625, 610, 570, 655, 550, 745, 592, 800, 590, 860, 578, 940, 568, 1010, 520, 1075, 505, 1130, 515, 1180, 565, 1230, 592, 1260, 580, 1305, 548, 1350, 548, 1410, 610, 1470, 685, 1500, 680, 1517, 658]));
  line(smooth(re), '#ff1a4a', 0.9);

  out.push('<g shape-rendering="crispEdges">');
  vline(1630.5, 111, 945, '#a6a6a6');
  hline(944.5, 6, 1630, '#a6a6a6');
  for (var i = 0; i < 21; i++) vline(6.5 + i * 64, 945, 949, '#a6a6a6');
  for (var k = 0; k < 17; k++) hline(Math.round(126 + k * 34.6) + 0.5, 1630, 1634, '#a6a6a6');
  hline(833.5, 1630, 1634, '#a6a6a6');
  hline(699.5, 1630, 1634, '#a6a6a6');
  hline(724.5, 1630, 1634, '#a6a6a6');
  hline(905.5, 1630, 1634, '#a6a6a6');
  out.push('</g>');

  /* small indicators */
  out.push('<path d="M6 944v-5l4 5z" fill="#8a8a8a"/>');
  out.push('<rect x="3.500" y="768.500" width="7" height="59" rx="3" fill="#000" stroke="#8a8a8a"/><rect x="4" y="803" width="6" height="24" rx="2" fill="#3fbf6a"/>');

  svg.innerHTML = out.join('');

  /* curve inside the statistics panel */
  var plot = document.querySelector('.dlg-plot');
  var ns = 'http://www.w3.org/2000/svg';
  var s2 = document.createElementNS(ns, 'svg');
  s2.setAttribute('class', 'eq');
  s2.setAttribute('width', '929');
  s2.setAttribute('height', '117');
  s2.setAttribute('viewBox', '302 152 929 117');
  s2.style.position = 'absolute';
  s2.style.left = '0';
  s2.style.top = '0';
  s2.innerHTML =
    '<path d="M314.500 155v98M314 252.500H1218" stroke="#7b828c" fill="none" shape-rendering="crispEdges"/>' +
    '<polyline points="315,253 500,239 711,220 771,214 860,202 996,179 1100,170 1219,157" fill="none" stroke="#00bfff" stroke-width="2" shape-rendering="crispEdges"/>' +
    '<path d="M1229 150v7l-2-3.500z" fill="#cfd6df"/>';
  plot.insertBefore(s2, plot.firstChild);
})();
```
